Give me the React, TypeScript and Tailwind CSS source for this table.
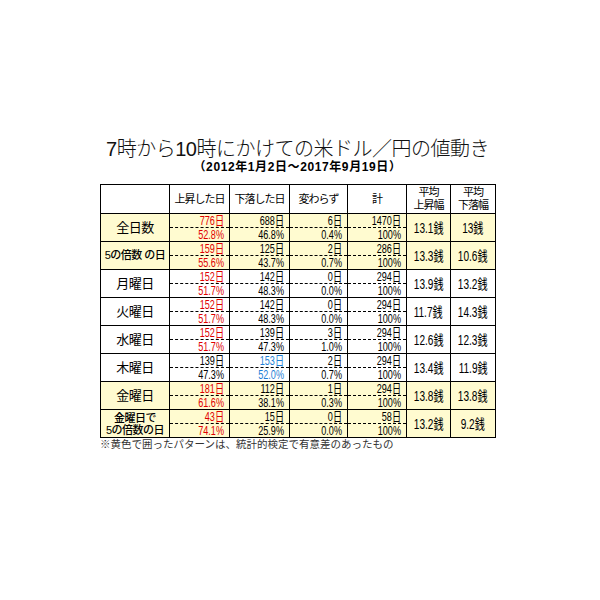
import React from "react";

type Color = "red" | "blue" | "black";
type Row = {
  label: React.ReactNode;
  labelClass: string;
  yellow: boolean;
  up: [string, string];
  upColor: Color;
  down: [string, string];
  downColor: Color;
  same: [string, string];
  total: [string, string];
  avgUp: string;
  avgDown: string;
};

const rows: Row[] = [
  { label: "全日数", labelClass: "text-[13px] tracking-[-0.5px]", yellow: true, up: ["776日", "52.8%"], upColor: "red", down: ["688日", "46.8%"], downColor: "black", same: ["6日", "0.4%"], total: ["1470日", "100%"], avgUp: "13.1銭", avgDown: "13銭" },
  { label: "5の倍数 の日", labelClass: "text-[11px] font-medium tracking-[-0.5px]", yellow: true, up: ["159日", "55.6%"], upColor: "red", down: ["125日", "43.7%"], downColor: "black", same: ["2日", "0.7%"], total: ["286日", "100%"], avgUp: "13.3銭", avgDown: "10.6銭" },
  { label: "月曜日", labelClass: "text-[13px] tracking-[-0.5px]", yellow: false, up: ["152日", "51.7%"], upColor: "red", down: ["142日", "48.3%"], downColor: "black", same: ["0日", "0.0%"], total: ["294日", "100%"], avgUp: "13.9銭", avgDown: "13.2銭" },
  { label: "火曜日", labelClass: "text-[13px] tracking-[-0.5px]", yellow: false, up: ["152日", "51.7%"], upColor: "red", down: ["142日", "48.3%"], downColor: "black", same: ["0日", "0.0%"], total: ["294日", "100%"], avgUp: "11.7銭", avgDown: "14.3銭" },
  { label: "水曜日", labelClass: "text-[13px] tracking-[-0.5px]", yellow: false, up: ["152日", "51.7%"], upColor: "red", down: ["139日", "47.3%"], downColor: "black", same: ["3日", "1.0%"], total: ["294日", "100%"], avgUp: "12.6銭", avgDown: "12.3銭" },
  { label: "木曜日", labelClass: "text-[13px] tracking-[-0.5px]", yellow: false, up: ["139日", "47.3%"], upColor: "black", down: ["153日", "52.0%"], downColor: "blue", same: ["2日", "0.7%"], total: ["294日", "100%"], avgUp: "13.4銭", avgDown: "11.9銭" },
  { label: "金曜日", labelClass: "text-[13px] tracking-[-0.5px]", yellow: true, up: ["181日", "61.6%"], upColor: "red", down: ["112日", "38.1%"], downColor: "black", same: ["1日", "0.3%"], total: ["294日", "100%"], avgUp: "13.8銭", avgDown: "13.8銭" },
  {
    label: (
      <>
        <div>金曜日で</div>
        <div>5の倍数の日</div>
      </>
    ),
    labelClass: "text-[11px] font-medium leading-[12px] tracking-[-0.5px]",
    yellow: true,
    up: ["43日", "74.1%"],
    upColor: "red",
    down: ["15日", "25.9%"],
    downColor: "black",
    same: ["0日", "0.0%"],
    total: ["58日", "100%"],
    avgUp: "13.2銭",
    avgDown: "9.2銭",
  },
];

function colorClass(c: Color) {
  return c === "red" ? "text-[#e00000]" : c === "blue" ? "text-[#1f7fd6]" : "text-black";
}

function Num({ text }: { text: string }) {
  return <span className="block origin-right scale-x-[0.7] whitespace-nowrap">{text}</span>;
}

function Avg({ text }: { text: string }) {
  return <span className="inline-block origin-center scale-x-[0.72] whitespace-nowrap">{text}</span>;
}

export default function App() {
  const topCell = "h-[14px] border border-black [border-bottom-style:dashed] p-0 pr-[5px] text-right text-[13px] leading-[12px] align-middle";
  const botCell = "h-[14px] border border-black [border-top-style:dashed] p-0 pr-[5px] text-right text-[13px] leading-[12px] align-middle";
  const head = "border border-black p-0 text-center text-[11px] tracking-[-1px] leading-[13px] font-normal";
  return (
    <div className="w-[600px] h-[600px] bg-white font-['Liberation_Sans','Noto_Sans_CJK_JP',sans-serif] text-black">
      <div className="ml-[100px] w-[395px] pt-[138px]">
        <div className="text-center text-[20px] font-light leading-[22px] tracking-[-0.5px] text-[#111]">
          7時から10時にかけての米ドル／円の値動き
        </div>
        <div className="text-center text-[12px] font-bold leading-[14px] tracking-[0.6px]">（2012年1月2日～2017年9月19日）</div>
        <table className="mt-[10px] w-[395px] table-fixed border-collapse">
          <colgroup>
            <col className="w-[69px]" />
            <col className="w-[60px]" />
            <col className="w-[60px]" />
            <col className="w-[58px]" />
            <col className="w-[59px]" />
            <col className="w-[44px]" />
            <col className="w-[45px]" />
          </colgroup>
          <thead>
            <tr className="h-[29px]">
              <th className={head}></th>
              <th className={head}>上昇した日</th>
              <th className={head}>下落した日</th>
              <th className={head}>変わらず</th>
              <th className={head}>計</th>
              <th className={head}>
                <div>平均</div>
                <div>上昇幅</div>
              </th>
              <th className={head}>
                <div>平均</div>
                <div>下落幅</div>
              </th>
            </tr>
          </thead>
          <tbody>
            {rows.map((r, i) => {
              const bg = r.yellow ? "bg-[#fffbd0]" : "bg-white";
              return (
                <React.Fragment key={i}>
                  <tr className={"h-[14px] " + bg}>
                    <td rowSpan={2} className={"border border-black p-0 text-center align-middle " + r.labelClass}>
                      {r.label}
                    </td>
                    <td className={topCell + " " + colorClass(r.upColor)}>
                      <Num text={r.up[0]} />
                    </td>
                    <td className={topCell + " " + colorClass(r.downColor)}>
                      <Num text={r.down[0]} />
                    </td>
                    <td className={topCell}>
                      <Num text={r.same[0]} />
                    </td>
                    <td className={topCell}>
                      <Num text={r.total[0]} />
                    </td>
                    <td rowSpan={2} className="border border-black p-0 text-center align-middle text-[14px] leading-[14px]">
                      <Avg text={r.avgUp} />
                    </td>
                    <td rowSpan={2} className="border border-black p-0 text-center align-middle text-[14px] leading-[14px]">
                      <Avg text={r.avgDown} />
                    </td>
                  </tr>
                  <tr className={"h-[14px] " + bg}>
                    <td className={botCell + " " + colorClass(r.upColor)}>
                      <Num text={r.up[1]} />
                    </td>
                    <td className={botCell + " " + colorClass(r.downColor)}>
                      <Num text={r.down[1]} />
                    </td>
                    <td className={botCell}>
                      <Num text={r.same[1]} />
                    </td>
                    <td className={botCell}>
                      <Num text={r.total[1]} />
                    </td>
                  </tr>
                </React.Fragment>
              );
            })}
          </tbody>
        </table>
        <div className="text-[10.5px] leading-[13px] text-[#333]">
          ※黄色で囲ったパターンは、統計的検定で有意差のあったもの
        </div>
      </div>
    </div>
  );
}
